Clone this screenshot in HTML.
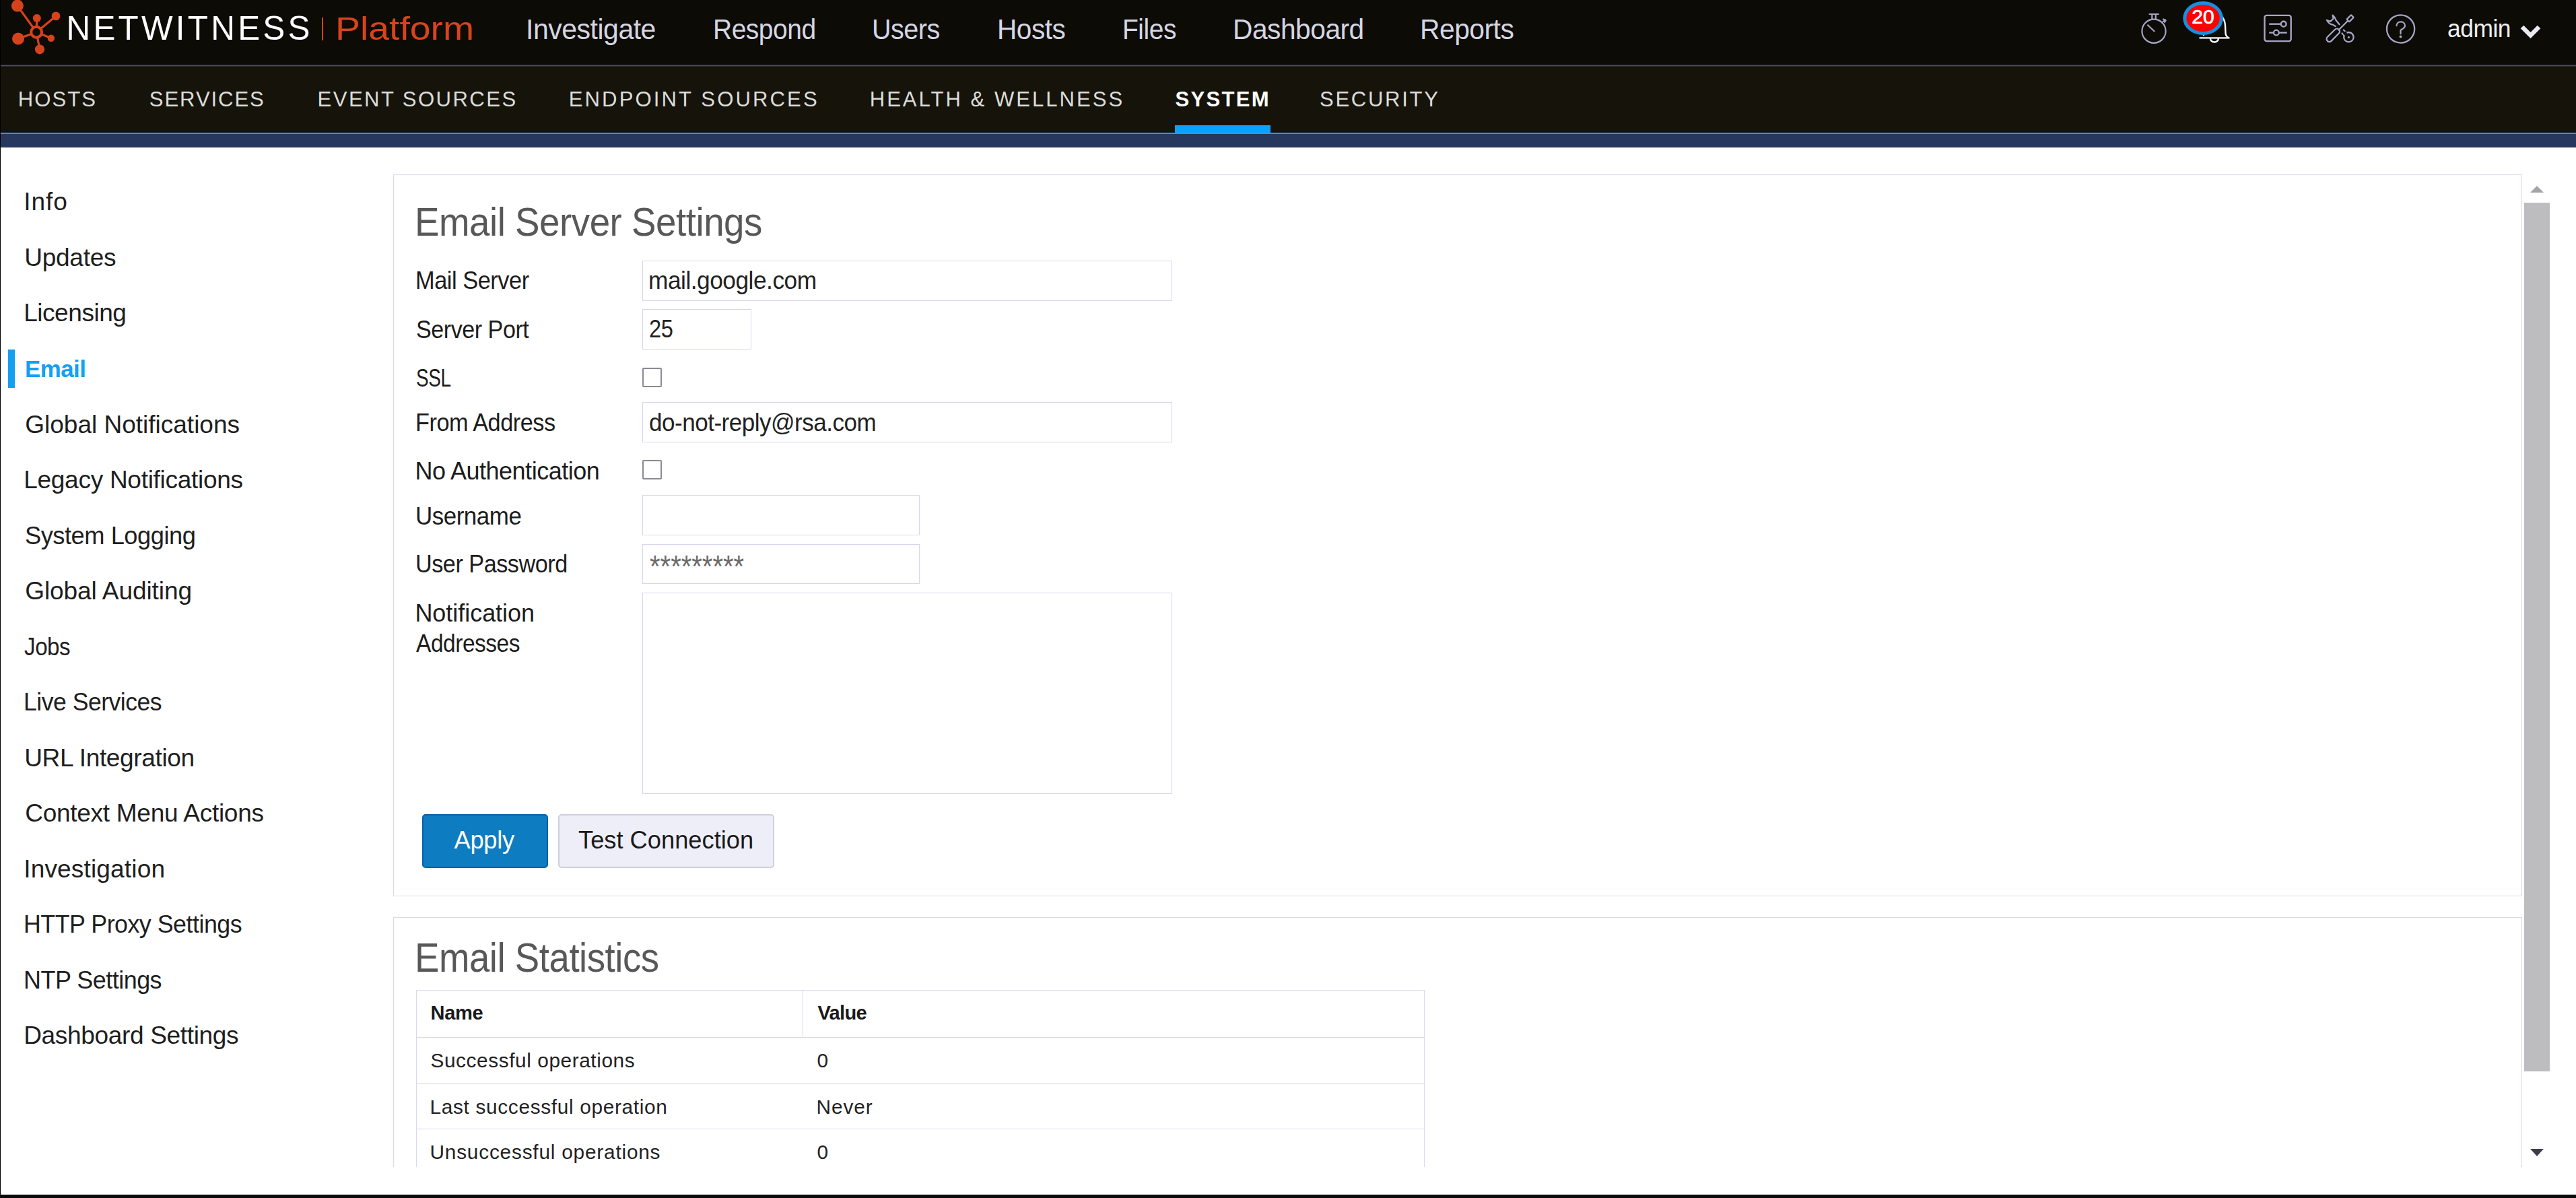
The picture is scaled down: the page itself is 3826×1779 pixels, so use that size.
<!DOCTYPE html>
<html><head><meta charset="utf-8">
<style>
html,body{margin:0;padding:0;width:3826px;height:1779px;overflow:hidden;background:#fff;font-family:"Liberation Sans",sans-serif;}
.a{position:absolute;box-sizing:border-box;}
.t{position:absolute;white-space:nowrap;font-family:"Liberation Sans",sans-serif;}
#top{left:0;top:0;width:3826px;height:96px;background:#0c0b06;}
#gl{left:0;top:96px;width:3826px;height:3px;background:linear-gradient(#2a2a32 0 1px,#50505f 1px 2px,#2a2a32 2px 3px);}
#sub{left:0;top:99px;width:3826px;height:98px;background:#16140a;}
#bl{left:0;top:197px;width:3826px;height:2px;background:#1aa0ff;}
#bb{left:0;top:199px;width:3826px;height:20px;background:#26385e;}
#lb{left:0;top:0;width:1px;height:1779px;background:#000;}
#bot{left:0;top:1774px;width:3826px;height:5px;background:#0a0a0a;}
.pn{border:1px solid #d9d9ee;background:#fff;}
.in{border:1px solid #d6d6ee;background:#fff;}
.cb{border:2px solid #8a8a96;background:#fff;border-radius:2px;}
.ln{background:#d9d9ee;}
</style></head><body>
<div class="a" id="top"></div>
<div class="a" id="gl"></div>
<div class="a" id="sub"></div>
<div class="a" id="bl"></div>
<div class="a" id="bb"></div>
<div class="a" id="lb"></div>
<div class="a" id="bot"></div>
<!-- system underline -->
<div class="a" style="left:1745px;top:186px;width:142px;height:11px;background:#0aa2ff;"></div>
<!-- sidebar active bar -->
<div class="a" style="left:12px;top:519px;width:10px;height:57px;background:#14a0f2;"></div>

<!-- panel 1 -->
<div class="a pn" style="left:584px;top:259px;width:3162px;height:1072px;"></div>
<!-- panel 2 (clipped) -->
<div class="a" style="left:584px;top:1362px;width:3162px;height:371px;overflow:hidden;">
  <div class="a pn" style="left:0;top:0;width:3162px;height:600px;"></div>
</div>
<!-- inputs -->
<div class="a in" style="left:954px;top:387px;width:787px;height:60px;"></div>
<div class="a in" style="left:954px;top:459px;width:162px;height:60px;"></div>
<div class="a cb" style="left:954px;top:546px;width:29px;height:29px;"></div>
<div class="a in" style="left:954px;top:597px;width:787px;height:60px;"></div>
<div class="a cb" style="left:954px;top:683px;width:29px;height:29px;"></div>
<div class="a in" style="left:954px;top:735px;width:412px;height:60px;"></div>
<div class="a in" style="left:954px;top:808px;width:412px;height:59px;"></div>
<div class="a in" style="left:954px;top:880px;width:787px;height:299px;"></div>
<!-- buttons -->
<div class="a" style="left:627px;top:1209px;width:187px;height:80px;background:#0e7cc0;border:2px solid #0a5fa8;border-radius:5px;"></div>
<div class="a" style="left:829px;top:1209px;width:321px;height:80px;background:#eeeef8;border:2px solid #cfcfdc;border-radius:5px;"></div>

<!-- table -->
<div class="a" style="left:618px;top:1470px;width:1498px;height:263px;overflow:hidden;">
  <div class="a" style="left:0;top:0;width:1498px;height:400px;border:1px solid #d9d9ee;"></div>
  <div class="a ln" style="left:574px;top:0;width:1px;height:70px;"></div>
  <div class="a ln" style="left:0;top:70px;width:1498px;height:1px;"></div>
  <div class="a ln" style="left:0;top:138px;width:1498px;height:1px;"></div>
  <div class="a ln" style="left:0;top:206px;width:1498px;height:1px;"></div>
</div>

<!-- scrollbar -->
<svg class="a" style="left:3746px;top:260px" width="80" height="1480">
  <polygon points="12,26 32,26 22,16" fill="#a4a4a8"/>
  <rect x="3" y="41" width="38" height="1290" fill="#bdbdc0"/>
  <polygon points="12,1446 32,1446 22,1457" fill="#3c3c4c"/>
</svg>

<!-- logo -->
<svg class="a" style="left:0;top:0" width="100" height="90" viewBox="0 0 100 90">
 <g stroke="#d6431a" stroke-width="3.2" fill="none">
  <line x1="25.9" y1="8.6" x2="54.1" y2="47.7"/>
  <line x1="54.8" y1="27" x2="54.1" y2="47.7"/>
  <line x1="83" y1="23.9" x2="54.1" y2="47.7"/>
  <line x1="27" y1="57.5" x2="54.1" y2="47.7"/>
  <line x1="75.9" y1="56.7" x2="54.1" y2="47.7"/>
  <line x1="59" y1="73.3" x2="54.1" y2="47.7"/>
 </g>
 <circle cx="54.1" cy="47.7" r="7.9" stroke="#d6431a" stroke-width="4.1" fill="#0c0b06"/>
 <g fill="#d6431a">
  <circle cx="25.9" cy="8.6" r="9"/>
  <circle cx="54.8" cy="27" r="6"/>
  <circle cx="83" cy="23.9" r="6.4"/>
  <circle cx="27" cy="57.5" r="9"/>
  <circle cx="75.9" cy="56.7" r="5.2"/>
  <circle cx="59" cy="73.3" r="7.1"/>
 </g>
</svg>
<div class="a" style="left:478px;top:26px;width:2px;height:34px;background:#d6431a;"></div>
<!-- stopwatch -->
<svg class="a" style="left:3170px;top:12px" width="60" height="60" viewBox="0 0 60 60">
 <g stroke="#a6a6c6" stroke-width="2.2" fill="none" stroke-linecap="round">
  <circle cx="29" cy="34.2" r="17.6"/>
  <line x1="22.5" y1="9" x2="35.8" y2="9"/>
  <line x1="26.3" y1="9" x2="26.3" y2="16.5"/>
  <line x1="31.8" y1="9" x2="31.8" y2="16.5"/>
  <line x1="41" y1="21.5" x2="46" y2="17.5"/>
  <polyline points="43,16.5 46.5,18.5 45,21"/>
  <line x1="20" y1="25.3" x2="29.5" y2="34.3"/>
 </g>
</svg>
<!-- bell + badge -->
<svg class="a" style="left:3235px;top:0" width="85" height="70" viewBox="0 0 85 70">
 <g stroke="#ffffff" stroke-width="2.4" fill="none">
  <path d="M31.5,56.4 L76.5,56.4"/>
  <path d="M37.5,53 C38.5,52 38.5,49 38.5,44 L38.5,38 C38.5,27 45,20 54,20 C63,20 69.5,27 70,38 L70.5,49 C70.5,52 71.5,54 74.5,56"/>
  <path d="M47.8,57 A6.1,5.5 0 0 0 60,57"/>
 </g>
 <ellipse cx="37.1" cy="27" rx="27.3" ry="22.5" fill="#ff0000" stroke="#178fe0" stroke-width="5"/>
 <text x="36.9" y="35" font-family="Liberation Sans" font-size="30" fill="#fff" stroke="#fff" stroke-width="0.7" text-anchor="middle">20</text>
</svg>
<!-- sliders -->
<svg class="a" style="left:3355px;top:15px" width="55" height="55" viewBox="0 0 55 55">
 <g stroke="#a6a6c6" stroke-width="2.4" fill="none">
  <rect x="8.5" y="7.9" width="39.2" height="38.2" rx="3"/>
  <line x1="15.2" y1="20.7" x2="32.9" y2="20.7"/>
  <circle cx="36.7" cy="20.7" r="3.9"/>
  <line x1="15.2" y1="33.5" x2="22" y2="33.5"/>
  <line x1="29.8" y1="33.5" x2="41.8" y2="33.5"/>
  <circle cx="25.9" cy="33.5" r="3.9"/>
 </g>
</svg>
<!-- tools -->
<svg class="a" style="left:3445px;top:15px" width="60" height="55" viewBox="0 0 60 55">
 <g stroke="#a6a6c6" stroke-width="2.3" fill="none" stroke-linejoin="round" stroke-linecap="round">
  <rect x="-12" y="-4.1" width="24" height="8.2" rx="4" transform="translate(20.3,37.3) rotate(-45)"/>
  <line x1="28.5" y1="29.5" x2="42" y2="16"/>
  <rect x="-4.6" y="-2.6" width="9.2" height="5.2" rx="0.8" transform="translate(45.6,12.3) rotate(-45)"/>
  <path d="M29.6,21.2 L24.8,15.6 C23.8,12.5 22,9.5 19.7,7.6 L20.6,12.6 L16.4,16.8 L10.9,15 C12.3,17.6 13.8,19.6 16.2,20.7 L19.5,21.6 L23.8,24"/>
  <line x1="35.9" y1="29.5" x2="39.6" y2="33.2"/>
  <line x1="33.6" y1="34.4" x2="36.3" y2="37.4"/>
  <circle cx="43.4" cy="40.2" r="7.2"/>
 </g>
 <rect x="36" y="32" width="4" height="5" fill="#0c0b06" transform="rotate(45 38 34.5)"/>
 <circle cx="43.4" cy="40.2" r="1.5" fill="#a6a6c6"/>
</svg>
<!-- help -->
<svg class="a" style="left:3535px;top:15px" width="60" height="55" viewBox="0 0 60 55">
 <g stroke="#a6a6c6" stroke-width="2.3" fill="none" stroke-linecap="round">
  <circle cx="30.6" cy="28" r="20.6"/>
  <path d="M24.5,23.2 C24.5,19.8 27.2,17.4 30.8,17.4 C34.4,17.4 37,19.8 37,23.2 C37,26.4 33.5,27.5 30.5,29.8 L30.5,35.2"/>
 </g>
 <circle cx="30.5" cy="39.4" r="1.9" fill="#a6a6c6"/>
</svg>
<!-- chevron -->
<svg class="a" style="left:3730px;top:25px" width="60" height="45" viewBox="0 0 60 45">
 <polyline points="16,15 28.5,27.5 41,15" stroke="#eaeaf2" stroke-width="6.5" fill="none" stroke-linejoin="miter"/>
</svg>

<div class="t" style="left:98.5px;top:17.4px;font-size:49.4px;line-height:49.4px;font-weight:400;color:#ffffff;letter-spacing:4.24px;">NETWITNESS</div>
<div class="t" style="left:498.0px;top:18.1px;font-size:49.0px;line-height:49.0px;font-weight:400;color:#d8441a;letter-spacing:0.00px;transform:scaleX(1.1297);transform-origin:0 0;">Platform</div>
<div class="t" style="left:781.4px;top:23.1px;font-size:41.9px;line-height:41.9px;font-weight:400;color:#d6d6e2;letter-spacing:-0.50px;transform:scaleX(0.9788);transform-origin:0 0;">Investigate</div>
<div class="t" style="left:1059.0px;top:23.1px;font-size:41.9px;line-height:41.9px;font-weight:400;color:#d6d6e2;letter-spacing:-0.50px;transform:scaleX(0.9298);transform-origin:0 0;">Respond</div>
<div class="t" style="left:1295.1px;top:23.1px;font-size:41.9px;line-height:41.9px;font-weight:400;color:#d6d6e2;letter-spacing:-0.50px;transform:scaleX(0.9435);transform-origin:0 0;">Users</div>
<div class="t" style="left:1480.9px;top:23.1px;font-size:41.9px;line-height:41.9px;font-weight:400;color:#d6d6e2;letter-spacing:-0.50px;transform:scaleX(0.9690);transform-origin:0 0;">Hosts</div>
<div class="t" style="left:1667.3px;top:23.1px;font-size:41.9px;line-height:41.9px;font-weight:400;color:#d6d6e2;letter-spacing:-0.50px;transform:scaleX(0.9297);transform-origin:0 0;">Files</div>
<div class="t" style="left:1831.4px;top:23.1px;font-size:41.9px;line-height:41.9px;font-weight:400;color:#d6d6e2;letter-spacing:-0.50px;transform:scaleX(0.9717);transform-origin:0 0;">Dashboard</div>
<div class="t" style="left:2109.1px;top:23.1px;font-size:41.9px;line-height:41.9px;font-weight:400;color:#d6d6e2;letter-spacing:-0.50px;transform:scaleX(0.9733);transform-origin:0 0;">Reports</div>
<div class="t" style="left:3634.6px;top:24.8px;font-size:36.3px;line-height:36.3px;font-weight:400;color:#f0f0f0;letter-spacing:-0.50px;transform:scaleX(0.9757);transform-origin:0 0;">admin</div>
<div class="t" style="left:26.7px;top:131.5px;font-size:31.1px;line-height:31.1px;font-weight:400;color:#dcdcdc;letter-spacing:2.06px;">HOSTS</div>
<div class="t" style="left:221.8px;top:131.5px;font-size:31.1px;line-height:31.1px;font-weight:400;color:#dcdcdc;letter-spacing:1.91px;">SERVICES</div>
<div class="t" style="left:471.6px;top:131.5px;font-size:31.1px;line-height:31.1px;font-weight:400;color:#dcdcdc;letter-spacing:2.42px;">EVENT SOURCES</div>
<div class="t" style="left:844.7px;top:131.5px;font-size:31.1px;line-height:31.1px;font-weight:400;color:#dcdcdc;letter-spacing:3.10px;">ENDPOINT SOURCES</div>
<div class="t" style="left:1291.7px;top:131.5px;font-size:31.1px;line-height:31.1px;font-weight:400;color:#dcdcdc;letter-spacing:2.99px;">HEALTH &amp; WELLNESS</div>
<div class="t" style="left:1745.6px;top:131.5px;font-size:31.1px;line-height:31.1px;font-weight:700;color:#ffffff;letter-spacing:2.25px;">SYSTEM</div>
<div class="t" style="left:1960.0px;top:131.5px;font-size:31.1px;line-height:31.1px;font-weight:400;color:#dcdcdc;letter-spacing:2.67px;">SECURITY</div>
<div class="t" style="left:35.2px;top:281.4px;font-size:37.1px;line-height:37.1px;font-weight:400;color:#1e1e1e;letter-spacing:0.93px;">Info</div>
<div class="t" style="left:36.2px;top:363.9px;font-size:37.1px;line-height:37.1px;font-weight:400;color:#1e1e1e;letter-spacing:-0.29px;">Updates</div>
<div class="t" style="left:35.2px;top:446.4px;font-size:37.1px;line-height:37.1px;font-weight:400;color:#1e1e1e;letter-spacing:-0.49px;">Licensing</div>
<div class="t" style="left:37.4px;top:530.9px;font-size:35.8px;line-height:35.8px;font-weight:700;color:#14a0f2;letter-spacing:-0.50px;transform:scaleX(0.9725);transform-origin:0 0;">Email</div>
<div class="t" style="left:37.2px;top:611.5px;font-size:37.1px;line-height:37.1px;font-weight:400;color:#1e1e1e;letter-spacing:-0.03px;">Global Notifications</div>
<div class="t" style="left:35.2px;top:694.0px;font-size:37.1px;line-height:37.1px;font-weight:400;color:#1e1e1e;letter-spacing:-0.31px;">Legacy Notifications</div>
<div class="t" style="left:37.2px;top:776.5px;font-size:37.1px;line-height:37.1px;font-weight:400;color:#1e1e1e;letter-spacing:-0.50px;transform:scaleX(0.9787);transform-origin:0 0;">System Logging</div>
<div class="t" style="left:37.2px;top:859.0px;font-size:37.1px;line-height:37.1px;font-weight:400;color:#1e1e1e;letter-spacing:-0.11px;">Global Auditing</div>
<div class="t" style="left:35.5px;top:941.5px;font-size:37.1px;line-height:37.1px;font-weight:400;color:#1e1e1e;letter-spacing:-0.50px;transform:scaleX(0.8941);transform-origin:0 0;">Jobs</div>
<div class="t" style="left:35.3px;top:1024.0px;font-size:37.1px;line-height:37.1px;font-weight:400;color:#1e1e1e;letter-spacing:-0.50px;transform:scaleX(0.9585);transform-origin:0 0;">Live Services</div>
<div class="t" style="left:36.2px;top:1106.5px;font-size:37.1px;line-height:37.1px;font-weight:400;color:#1e1e1e;letter-spacing:-0.38px;">URL Integration</div>
<div class="t" style="left:37.2px;top:1189.0px;font-size:37.1px;line-height:37.1px;font-weight:400;color:#1e1e1e;letter-spacing:-0.31px;">Context Menu Actions</div>
<div class="t" style="left:35.2px;top:1271.5px;font-size:37.1px;line-height:37.1px;font-weight:400;color:#1e1e1e;letter-spacing:0.14px;">Investigation</div>
<div class="t" style="left:35.3px;top:1354.0px;font-size:37.1px;line-height:37.1px;font-weight:400;color:#1e1e1e;letter-spacing:-0.50px;transform:scaleX(0.9646);transform-origin:0 0;">HTTP Proxy Settings</div>
<div class="t" style="left:35.3px;top:1436.5px;font-size:37.1px;line-height:37.1px;font-weight:400;color:#1e1e1e;letter-spacing:-0.50px;transform:scaleX(0.9685);transform-origin:0 0;">NTP Settings</div>
<div class="t" style="left:35.2px;top:1519.0px;font-size:37.1px;line-height:37.1px;font-weight:400;color:#1e1e1e;letter-spacing:-0.37px;">Dashboard Settings</div>
<div class="t" style="left:615.9px;top:301.1px;font-size:58.7px;line-height:58.7px;font-weight:300;color:#585858;letter-spacing:-0.50px;transform:scaleX(0.9316);transform-origin:0 0;">Email Server Settings</div>
<div class="t" style="left:616.5px;top:398.9px;font-size:36.0px;line-height:36.0px;font-weight:400;color:#1c1c1c;letter-spacing:-0.50px;transform:scaleX(0.9552);transform-origin:0 0;">Mail Server</div>
<div class="t" style="left:617.5px;top:471.5px;font-size:36.0px;line-height:36.0px;font-weight:400;color:#1c1c1c;letter-spacing:-0.50px;transform:scaleX(0.9474);transform-origin:0 0;">Server Port</div>
<div class="t" style="left:617.6px;top:543.5px;font-size:36.0px;line-height:36.0px;font-weight:400;color:#1c1c1c;letter-spacing:-0.50px;transform:scaleX(0.7751);transform-origin:0 0;">SSL</div>
<div class="t" style="left:616.5px;top:609.8px;font-size:36.0px;line-height:36.0px;font-weight:400;color:#1c1c1c;letter-spacing:-0.50px;transform:scaleX(0.9519);transform-origin:0 0;">From Address</div>
<div class="t" style="left:616.4px;top:682.0px;font-size:36.0px;line-height:36.0px;font-weight:400;color:#1c1c1c;letter-spacing:-0.49px;">No Authentication</div>
<div class="t" style="left:616.5px;top:748.5px;font-size:36.0px;line-height:36.0px;font-weight:400;color:#1c1c1c;letter-spacing:-0.50px;transform:scaleX(0.9709);transform-origin:0 0;">Username</div>
<div class="t" style="left:616.5px;top:819.5px;font-size:36.0px;line-height:36.0px;font-weight:400;color:#1c1c1c;letter-spacing:-0.50px;transform:scaleX(0.9502);transform-origin:0 0;">User Password</div>
<div class="t" style="left:616.4px;top:893.1px;font-size:36.0px;line-height:36.0px;font-weight:400;color:#1c1c1c;letter-spacing:-0.04px;">Notification</div>
<div class="t" style="left:618.4px;top:938.3px;font-size:36.0px;line-height:36.0px;font-weight:400;color:#1c1c1c;letter-spacing:-0.50px;transform:scaleX(0.9304);transform-origin:0 0;">Addresses</div>
<div class="t" style="left:962.8px;top:398.9px;font-size:36.0px;line-height:36.0px;font-weight:400;color:#222;letter-spacing:-0.50px;transform:scaleX(0.9803);transform-origin:0 0;">mail.google.com</div>
<div class="t" style="left:964.1px;top:471.1px;font-size:36.0px;line-height:36.0px;font-weight:400;color:#222;letter-spacing:-0.50px;transform:scaleX(0.9061);transform-origin:0 0;">25</div>
<div class="t" style="left:963.8px;top:609.8px;font-size:36.0px;line-height:36.0px;font-weight:400;color:#222;letter-spacing:-0.50px;transform:scaleX(0.9728);transform-origin:0 0;">do-not-reply@rsa.com</div>
<div class="t" style="left:674.6px;top:1230.3px;font-size:36.3px;line-height:36.3px;font-weight:400;color:#ffffff;letter-spacing:-0.31px;">Apply</div>
<div class="t" style="left:859.0px;top:1230.3px;font-size:36.3px;line-height:36.3px;font-weight:400;color:#1a1a1a;letter-spacing:-0.01px;">Test Connection</div>
<div class="t" style="left:616.4px;top:1392.3px;font-size:60.3px;line-height:60.3px;font-weight:300;color:#585858;letter-spacing:-0.50px;transform:scaleX(0.9048);transform-origin:0 0;">Email Statistics</div>
<div class="t" style="left:639.5px;top:1489.8px;font-size:29.1px;line-height:29.1px;font-weight:700;color:#1a1a1a;letter-spacing:-0.32px;">Name</div>
<div class="t" style="left:1214.5px;top:1489.8px;font-size:29.1px;line-height:29.1px;font-weight:700;color:#1a1a1a;letter-spacing:-0.71px;">Value</div>
<div class="t" style="left:639.5px;top:1560.3px;font-size:29.8px;line-height:29.8px;font-weight:400;color:#222;letter-spacing:0.58px;">Successful operations</div>
<div class="t" style="left:1213.5px;top:1560.3px;font-size:29.8px;line-height:29.8px;font-weight:400;color:#222;letter-spacing:0.00px;">0</div>
<div class="t" style="left:638.5px;top:1628.6px;font-size:29.8px;line-height:29.8px;font-weight:400;color:#222;letter-spacing:0.67px;">Last successful operation</div>
<div class="t" style="left:1212.5px;top:1628.6px;font-size:29.8px;line-height:29.8px;font-weight:400;color:#222;letter-spacing:0.93px;">Never</div>
<div class="t" style="left:638.5px;top:1696.3px;font-size:29.8px;line-height:29.8px;font-weight:400;color:#222;letter-spacing:0.79px;">Unsuccessful operations</div>
<div class="t" style="left:1213.5px;top:1696.3px;font-size:29.8px;line-height:29.8px;font-weight:400;color:#222;letter-spacing:0.00px;">0</div>
<div class="t" style="left:965px;top:823px;font-size:40px;line-height:40px;color:#6c6c6c;transform:scaleY(1.133);transform-origin:0 35px;">*********</div>
</body></html>
